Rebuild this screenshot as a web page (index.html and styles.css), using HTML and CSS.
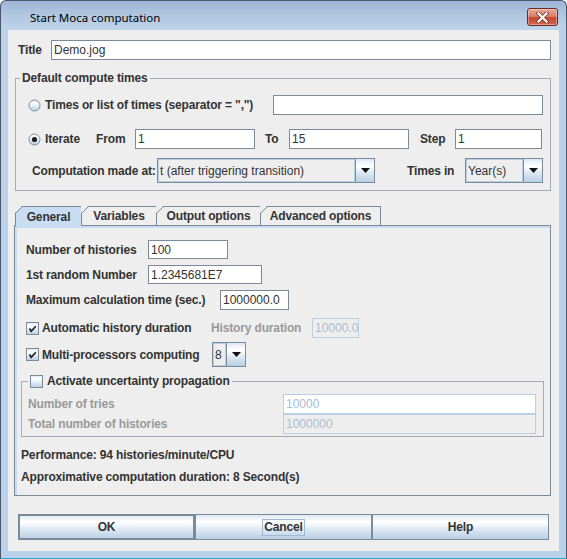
FILE: index.html
```html
<!DOCTYPE html>
<html>
<head>
<meta charset="utf-8">
<link rel="stylesheet" href="styles.css">
</head>
<body>
<div class="window">
  <div class="titlebar">
    <span class="wtitle">Start Moca computation</span>
    <div class="close">
      <svg width="17" height="11" viewBox="0 0 17 11"><path d="M4.5 1.5 L12.5 9.5 M12.5 1.5 L4.5 9.5" stroke="#6b3a30" stroke-width="3.8" stroke-linecap="square"/><path d="M4.5 1.5 L12.5 9.5 M12.5 1.5 L4.5 9.5" stroke="#ffffff" stroke-width="2.2" stroke-linecap="square"/></svg>
    </div>
  </div>
  <div class="client">
    <div class="title-row">
      <span class="lbl w-title">Title</span>
      <div class="field title-field">Demo.jog</div>
    </div>

    <fieldset class="group times">
      <legend>Default compute times</legend>
      <div class="g-row r1">
        <span class="radio"><svg width="13" height="13" viewBox="0 0 13 13"><defs><linearGradient id="rg1" x1="0" y1="0" x2="0" y2="1"><stop offset="0" stop-color="#dde8f3"/><stop offset="0.3" stop-color="#ffffff"/><stop offset="0.6" stop-color="#dde8f3"/><stop offset="1" stop-color="#b8cfe5"/></linearGradient></defs><circle cx="6.5" cy="6.5" r="5.5" fill="url(#rg1)" stroke="#7a8a99"/></svg></span>
        <span class="lbl w-times">Times or list of times (separator = ",")</span>
        <div class="field w270"></div>
      </div>
      <div class="g-row r2">
        <span class="radio"><svg width="13" height="13" viewBox="0 0 13 13"><circle cx="6.5" cy="6.5" r="5.5" fill="url(#rg1)" stroke="#7a8a99"/><circle cx="6.5" cy="6.5" r="2.6" fill="#222"/></svg></span>
        <span class="lbl w-iter">Iterate</span>
        <span class="lbl w-from">From</span>
        <div class="field w120">1</div>
        <span class="lbl w-to">To</span>
        <div class="field w120">15</div>
        <span class="lbl w-step">Step</span>
        <div class="field w87">1</div>
      </div>
      <div class="g-row r3">
        <span class="lbl w-comp">Computation made at:</span>
        <div class="combo w218"><div class="cval">t (after triggering transition)</div><div class="carrow"><svg width="9" height="5" viewBox="0 0 9 5"><path d="M0 0 H9 L4.5 5 Z" fill="#111"/></svg></div></div>
        <span class="lbl w-tin">Times in</span>
        <div class="combo w78"><div class="cval">Year(s)</div><div class="carrow"><svg width="9" height="5" viewBox="0 0 9 5"><path d="M0 0 H9 L4.5 5 Z" fill="#111"/></svg></div></div>
      </div>
    </fieldset>

    <div class="tabs">
      <div class="tab sel t-gen">General</div>
      <div class="tab t-var">Variables</div>
      <div class="tab t-out">Output options</div>
      <div class="tab last t-adv">Advanced options</div>
    </div>
    <div class="panel">
      <div class="p-row pr1">
        <span class="lbl w122">Number of histories</span>
        <div class="field w80 h19">100</div>
      </div>
      <div class="p-row pr2">
        <span class="lbl w122">1st random Number</span>
        <div class="field w114 h19">1.2345681E7</div>
      </div>
      <div class="p-row pr3">
        <span class="lbl w194">Maximum calculation time (sec.)</span>
        <div class="field w69">1000000.0</div>
      </div>
      <div class="p-row pr4">
        <span class="check"><svg width="13" height="13" viewBox="0 0 13 13"><rect x="0.5" y="0.5" width="12" height="12" fill="url(#rg1)" stroke="#7a8a99"/><path d="M3.5 6.5 L5.2 9.3 L9.8 4.2" fill="none" stroke="#222" stroke-width="1.7"/></svg></span>
        <span class="lbl w169">Automatic history duration</span>
        <span class="lbl dis w101">History duration</span>
        <div class="field disabled w47">10000.0</div>
      </div>
      <div class="p-row pr5">
        <span class="check"><svg width="13" height="13" viewBox="0 0 13 13"><rect x="0.5" y="0.5" width="12" height="12" fill="url(#rg1)" stroke="#7a8a99"/><path d="M3.5 6.5 L5.2 9.3 L9.8 4.2" fill="none" stroke="#222" stroke-width="1.7"/></svg></span>
        <span class="lbl w170">Multi-processors computing</span>
        <div class="combo w34"><div class="cval">8</div><div class="carrow"><svg width="9" height="5" viewBox="0 0 9 5"><path d="M0 0 H9 L4.5 5 Z" fill="#111"/></svg></div></div>
      </div>
      <fieldset class="group unc">
        <legend><span class="check"><svg width="13" height="13" viewBox="0 0 13 13"><rect x="0.5" y="0.5" width="12" height="12" fill="url(#rg1)" stroke="#7a8a99"/></svg></span><span class="lbl">Activate uncertainty propagation</span></legend>
        <div class="u-row ur1">
          <span class="lbl dis w255">Number of tries</span>
          <div class="field disabled white w253">10000</div>
        </div>
        <div class="u-row">
          <span class="lbl dis w255">Total number of histories</span>
          <div class="field disabled w253">1000000</div>
        </div>
      </fieldset>
      <div class="info perf">Performance: 94 histories/minute/CPU</div>
      <div class="info approx">Approximative computation duration: 8 Second(s)</div>
    </div>

    <div class="buttons">
      <div class="btn default">OK</div>
      <div class="btn"><span class="focus">Cancel</span></div>
      <div class="btn">Help</div>
    </div>
  </div>
</div>
</body>
</html>
```

FILE: styles.css
```css
* { box-sizing: border-box; }
html, body { margin: 0; padding: 0; background: #ffffff; }
body { width: 567px; height: 559px; overflow: hidden; }

.window {
  width: 567px; height: 559px;
  border: 1px solid #4a5666;
  border-bottom-color: #2aa8cf;
  border-radius: 6px 6px 0 0;
  background: linear-gradient(#9bb5d4 0px, #b0c7e1 14px, #bfd4ea 29px, #b9d1ea 30px, #b9d1ea 100%);
  display: flex; flex-direction: column;
}
.titlebar {
  height: 29px; display: flex; align-items: center;
  padding-left: 29px; padding-right: 8px;
}
.wtitle {
  font-family: "Noto Sans", "Liberation Sans", sans-serif;
  font-size: 11.5px; color: #000;
  margin-top: 3px;
}
.close {
  margin-left: auto; margin-top: 3px;
  width: 31px; height: 18px;
  border: 1px solid #6e2b25; border-radius: 3px;
  background: linear-gradient(#e9a896 0%, #dc806b 45%, #c7462f 55%, #d0684f 100%);
  display: flex; align-items: center; justify-content: center;
  box-shadow: inset 0 0 0 1px rgba(255,255,255,0.35);
}

.client {
  margin: 0 7px; width: 551px; height: 521px;
  background: #eeeeee;
  font-family: "Liberation Sans", Arial, sans-serif;
  font-size: 12px; color: #333333;
}

.lbl { font-weight: bold; white-space: nowrap; flex: none; line-height: 14px; letter-spacing: -0.15px; }
.lbl.dis { color: #999999; }

.field {
  flex: none; height: 20px; background: #ffffff;
  border: 1px solid #7a8a99;
  padding-left: 2px; display: flex; align-items: center;
  white-space: nowrap; overflow: hidden; color: #333333;
}
.field.h19 { height: 19px; }
.field.disabled { background: #eeeeee; border-color: #b8cfe5; color: #a9bdd1; }
.field.disabled.white { background: #ffffff; }

.title-row { display: flex; align-items: center; height: 20px; margin-top: 10px; padding-left: 10px; }
.w-title { width: 33px; }
.title-field { width: 500px; }

.group { border: 1px solid #a6abb2; padding: 0; margin: 0; min-width: 0; }
.group legend { padding: 0 2px; line-height: 14px; font-weight: bold; letter-spacing: -0.15px; }
.times { margin: 11px 0 0 7px; width: 536px; }
.times legend { margin-left: 4px; }

.g-row { display: flex; align-items: center; height: 20px; }
.r1 { margin-top: 10px; }
.r2 { margin-top: 14px; }
.r3 { margin-top: 9px; height: 25px; margin-bottom: 7px; }

.radio, .check { width: 13px; height: 13px; flex: none; display: block; }
.radio svg, .check svg { display: block; }
.r1 .radio, .r2 .radio { margin-left: 12px; }
.w-times { margin-left: 4px; width: 228px; }
.w270 { width: 270px; }
.w-iter { margin-left: 4px; width: 51px; }
.w-from { width: 39px; }
.w120 { width: 120px; }
.w-to { margin-left: 10px; width: 24px; }
.w-step { margin-left: 11px; width: 35px; }
.w87 { width: 87px; }
.w-comp { margin-left: 16px; width: 125px; }
.w-tin { margin-left: 32px; width: 58px; }

.combo {
  flex: none; height: 25px; display: flex;
  border: 1px solid #7a8a99; background: #eeeeee;
}
.cval {
  flex: 1; min-width: 0; display: flex; align-items: center;
  padding-left: 1px; white-space: nowrap; overflow: hidden;
  border: 1px solid #b8cfe5;
}
.carrow {
  width: 19px; flex: none; border-left: 1px solid #7a8a99;
  background: linear-gradient(#dde8f3 0%, #ffffff 30%, #dde8f3 60%, #b8cfe5 100%);
  display: flex; align-items: center; justify-content: center;
}
.carrow svg { display: block; }
.w218 { width: 218px; }
.w78 { width: 78px; }
.w34 { width: 34px; }

.tabs {
  display: flex; margin: 15px 0 0 7px; height: 19px;
  position: relative; z-index: 1;
}
.tab {
  position: relative; height: 19px;
  border-top: 1px solid #7a8a99; border-left: 1px solid #7a8a99;
  background: #eeeeee; font-weight: bold; letter-spacing: -0.15px;
  display: flex; align-items: center; justify-content: center;
  clip-path: polygon(7px 0, 100% 0, 100% 100%, 0 100%, 0 7px);
  white-space: nowrap;
}
.tab::before {
  content: ""; position: absolute; left: -1px; top: -1px; width: 8px; height: 8px;
  background: linear-gradient(135deg, transparent 44%, #7a8a99 44%, #7a8a99 53%, transparent 53%);
}
.tab.last { border-right: 1px solid #7a8a99; }
.tab.sel { background: #c8ddf2; height: 20px; margin-bottom: -1px; align-self: flex-start; }
.t-gen { width: 66px; }
.t-var { width: 75px; }
.t-out { width: 104px; }
.t-adv { width: 121px; }

.panel {
  margin-left: 6px; width: 537px; height: 271px;
  border: 1px solid #7a8a99;
  box-shadow: inset 0 2px 0 #c8ddf2, inset 2px 0 0 #c8ddf2;
  padding-left: 6px;
  display: flex; flex-direction: column;
}
.p-row { display: flex; align-items: center; height: 20px; margin-left: 5px; }
.pr1 { margin-top: 14px; height: 19px; }
.pr2 { margin-top: 6px; height: 19px; }
.pr3 { margin-top: 6px; }
.pr4 { margin-top: 8px; }
.pr5 { margin-top: 4px; height: 25px; }
.pr4 .check + .lbl, .pr5 .check + .lbl { margin-left: 3px; }
.w122 { width: 122px; }
.w80 { width: 80px; }
.w114 { width: 114px; }
.w194 { width: 194px; }
.w69 { width: 69px; }
.w169 { width: 169px; }
.w101 { width: 101px; }
.w47 { width: 47px; }
.w170 { width: 170px; }

.unc { margin: 7px 0 0 0; width: 523px; }
.unc legend { margin-left: 6px; display: flex; align-items: center; height: 14px; }
.unc legend .lbl { margin-left: 4px; }
.u-row { display: flex; align-items: center; height: 20px; padding-left: 6px; }
.ur1 { margin-top: 6px; }
.u-row:last-child { margin-bottom: 2px; }
.w255 { width: 255px; }
.w253 { width: 253px; }

.info { font-weight: bold; line-height: 14px; white-space: nowrap; letter-spacing: -0.15px; }
.perf { margin-top: 11px; }
.approx { margin-top: 8px; }

.buttons { display: flex; margin: 18px 0 0 10px; }
.btn {
  width: 177px; height: 26px;
  border: 1px solid #7a8a99;
  background: linear-gradient(#dde8f3 0%, #ffffff 30%, #dde8f3 60%, #b8cfe5 100%);
  display: flex; align-items: center; justify-content: center;
  font-weight: bold; letter-spacing: -0.15px;
}
.btn.default { box-shadow: inset 0 0 0 1px #7a8a99; }
.focus { border: 1px solid #a3b8cc; padding: 0 1px; line-height: 15px; }
```
